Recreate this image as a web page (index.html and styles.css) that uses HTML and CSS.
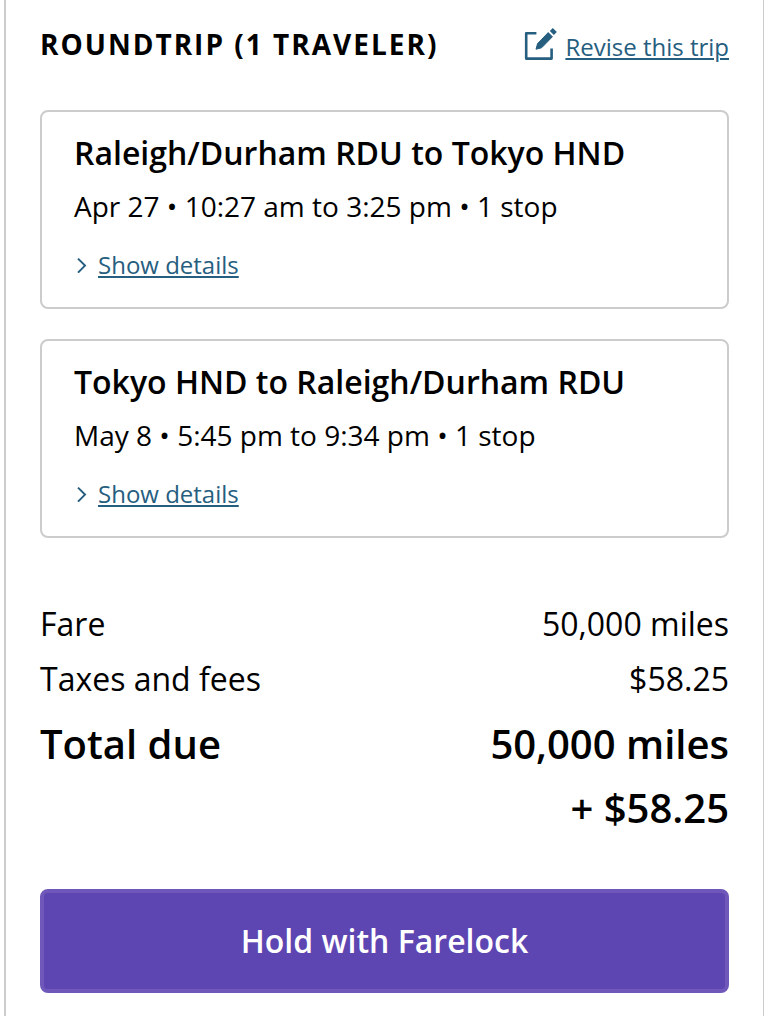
FILE: index.html
```html
<!DOCTYPE html>
<html lang="en">
<head>
<meta charset="utf-8">
<meta name="viewport" content="width=device-width, initial-scale=1">
<title>Trip summary</title>
<link rel="stylesheet" href="styles.css">
</head>
<body>
<main class="summary">
  <header class="summary-header">
    <h1 class="summary-title">Roundtrip (1 traveler)</h1>
    <a class="revise" href="#revise">
      <svg class="revise-icon" viewBox="0 0 34 34" aria-hidden="true">
        <path d="M13.4 6.2H3.2v25.4h25.4V21.6" fill="none" stroke="currentColor" stroke-width="2.6" stroke-linejoin="round"/>
        <path d="M13 22.2l1.6-5.6L25.2 5.6l4.2 4.2-10.8 11z" fill="currentColor" stroke="currentColor" stroke-width="1" stroke-linejoin="round"/>
        <path d="M26.8 4.1l3-3 4 4-3 3z" fill="currentColor"/>
      </svg>
      <span class="link-text">Revise this trip</span>
    </a>
  </header>

  <section class="flight">
    <h2 class="flight-route">Raleigh/Durham RDU to Tokyo HND</h2>
    <p class="flight-time">Apr 27 • 10:27 am to 3:25 pm • 1 stop</p>
    <a class="details" href="#outbound">
      <svg class="chevron" viewBox="0 0 16 16" aria-hidden="true"><path d="M4 1.6l7 7-7 7" fill="none" stroke="currentColor" stroke-width="2"/></svg>
      <span class="link-text">Show details</span>
    </a>
  </section>

  <section class="flight">
    <h2 class="flight-route">Tokyo HND to Raleigh/Durham RDU</h2>
    <p class="flight-time">May 8 • 5:45 pm to 9:34 pm • 1 stop</p>
    <a class="details" href="#return">
      <svg class="chevron" viewBox="0 0 16 16" aria-hidden="true"><path d="M4 1.6l7 7-7 7" fill="none" stroke="currentColor" stroke-width="2"/></svg>
      <span class="link-text">Show details</span>
    </a>
  </section>

  <dl class="costs">
    <div class="cost"><dt>Fare</dt><dd>50,000 miles</dd></div>
    <div class="cost"><dt>Taxes and fees</dt><dd>$58.25</dd></div>
    <div class="cost total"><dt>Total due</dt><dd>50,000 miles<br>+ $58.25</dd></div>
  </dl>

  <button class="hold" type="button">Hold with Farelock</button>
</main>
</body>
</html>
```
FILE: styles.css
```css
* {
  box-sizing: border-box;
}

body {
  margin: 0;
  background: #fff;
  color: #000;
  font-family: "Open Sans", "Noto Sans", sans-serif;
}

h1, h2, p, dl, dd {
  margin: 0;
}

.summary {
  min-height: 100vh;
  margin-left: 4px;
  padding: 23px 34px;
  border-left: 2px solid #ccc;
  border-right: 1px solid #ccc;
}

.summary-header {
  display: flex;
  justify-content: space-between;
  align-items: flex-start;
  margin-bottom: 45px;
}

.summary-title {
  font-size: 28px;
  line-height: 42px;
  font-weight: 700;
  letter-spacing: 2px;
  text-transform: uppercase;
}

.revise, .details {
  display: flex;
  align-items: center;
  color: #265e80;
  font-size: 24px;
  line-height: 36px;
  text-decoration: none;
}

.revise {
  align-items: flex-end;
  gap: 8px;
  padding-top: 4px;
}

.link-text {
  text-decoration: underline;
  text-decoration-thickness: 2px;
  text-underline-offset: 2px;
}

.revise .link-text {
  line-height: 32px;
  padding-top: 4px;
}

.revise-icon {
  width: 34px;
  height: 34px;
  align-self: flex-start;
}

.flight {
  margin-bottom: 30px;
  padding: 19px 32px 24px;
  border: 2px solid #ccc;
  border-radius: 8px;
}

.flight-route {
  font-size: 32px;
  line-height: 44px;
  font-weight: 600;
}

.flight-time {
  margin: 10px 0 20px;
  font-size: 28px;
  line-height: 42px;
}

.details {
  width: max-content;
  gap: 8px;
}

.chevron {
  width: 16px;
  height: 16px;
}

.costs {
  margin: 58px 0 49px;
}

.cost {
  display: flex;
  justify-content: space-between;
  font-size: 32px;
  line-height: 55px;
}

.cost dd {
  text-align: right;
}

.total {
  margin-top: 6px;
  font-size: 40px;
  line-height: 64px;
  font-weight: 600;
}

.hold {
  width: 100%;
  padding: 26px;
  border: 4px solid #6f58b9;
  border-radius: 8px;
  background: #5d45b2;
  color: #fff;
  font: 600 32px/44px "Open Sans", "Noto Sans", sans-serif;
}
```
